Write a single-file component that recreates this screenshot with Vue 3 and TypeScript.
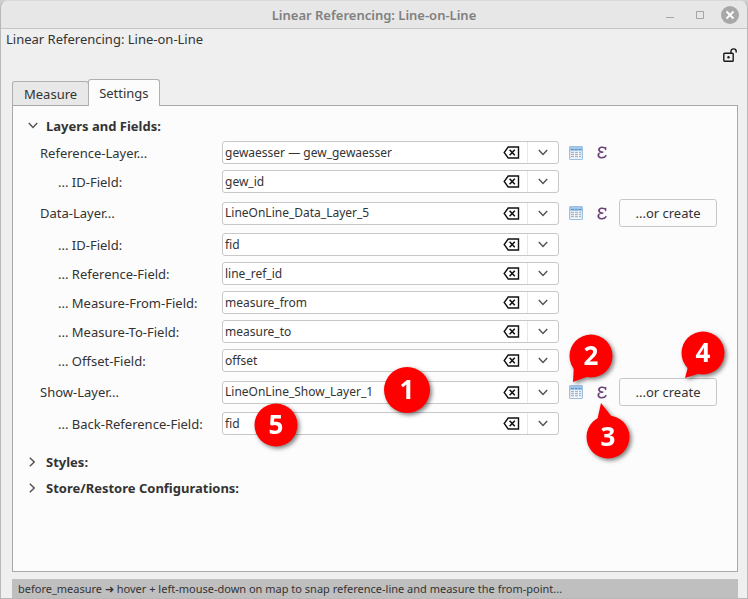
<script setup lang="ts">
import { ref } from 'vue'

interface FieldRow {
  id: string
  label: string
  value: string
  layer?: boolean
  create?: boolean
}

interface Callout {
  n: number
  r: number
  tail?: string
}

const rows = ref<FieldRow[]>([
  { id: 'ref-layer', label: 'Reference-Layer...', value: 'gewaesser — gew_gewaesser', layer: true },
  { id: 'ref-id', label: '... ID-Field:', value: 'gew_id' },
  { id: 'data-layer', label: 'Data-Layer...', value: 'LineOnLine_Data_Layer_5', layer: true, create: true },
  { id: 'data-id', label: '... ID-Field:', value: 'fid' },
  { id: 'data-ref', label: '... Reference-Field:', value: 'line_ref_id' },
  { id: 'data-from', label: '... Measure-From-Field:', value: 'measure_from' },
  { id: 'data-to', label: '... Measure-To-Field:', value: 'measure_to' },
  { id: 'data-offset', label: '... Offset-Field:', value: 'offset' },
  { id: 'show-layer', label: 'Show-Layer...', value: 'LineOnLine_Show_Layer_1', layer: true, create: true },
  { id: 'show-back', label: '... Back-Reference-Field:', value: 'fid' },
])

const callouts: Callout[] = [
  { n: 1, r: 23 },
  { n: 2, r: 21.5, tail: 'M-17 8 L-18 26 L-2 20 Z' },
  { n: 3, r: 21.5, tail: 'M-11 -16 L-7 -34 L4 -20 Z' },
  { n: 4, r: 21.5, tail: 'M-14 10 L-18 25 L-2 20 Z' },
  { n: 5, r: 21.5 },
]

const open = ref({ layers: true, styles: false, store: false })

function clearRow(row: FieldRow) {
  row.value = ''
}
</script>

<template>
  <div class="window">
    <header class="titlebar">
      <h1>Linear Referencing: Line-on-Line</h1>
      <div class="controls">
        <button type="button" aria-label="Minimize">
          <svg width="18" height="18" viewBox="0 0 18 18"><path d="M5 11.5h8" stroke="#a5a5a5" /></svg>
        </button>
        <button type="button" aria-label="Maximize">
          <svg width="18" height="18" viewBox="0 0 18 18"><path d="M5.5 5.5h7v7h-7z" fill="none" stroke="#a5a5a5" /></svg>
        </button>
        <button type="button" aria-label="Close">
          <svg width="18" height="18" viewBox="0 0 18 18">
            <circle cx="9" cy="9" r="9" fill="#a8a8a8" />
            <path d="M5.500 5.500l7 7M12.500 5.500l-7 7" stroke="#fff" stroke-width="1.8" />
          </svg>
        </button>
      </div>
    </header>

    <main class="body">
      <p class="dock-title">Linear Referencing: Line-on-Line</p>
      <div class="lock-bar">
        <button type="button" aria-label="Unlock">
          <svg width="14" height="14" viewBox="0 0 14 14" fill="none" stroke="#1a1a1a" stroke-width="1.4">
            <rect x="0.8" y="5.2" width="9.4" height="8" rx="0.8" />
            <path d="M8 5V3.4Q8 0.9 10.6 0.9Q13.2 0.9 13.2 3.4V4.6" />
            <circle cx="5.5" cy="9.2" r="1.2" fill="#1a1a1a" stroke="none" />
          </svg>
        </button>
      </div>

      <div class="tabs" role="tablist">
        <button type="button" role="tab" aria-selected="false" class="tab">Measure</button>
        <button type="button" role="tab" aria-selected="true" class="tab active">Settings</button>
      </div>

      <section class="panel" role="tabpanel">
        <button type="button" class="section" :aria-expanded="open.layers" @click="open.layers = !open.layers">
          <svg width="10" height="10" viewBox="0 0 10 10"><path d="M0.8 2L5 6.4L9.2 2" /></svg>
          Layers and Fields:
        </button>

        <div v-show="open.layers" class="form">
          <div v-for="row in rows" :key="row.id" class="row" :class="{ tall: row.create }">
            <label :for="row.id" :class="{ sub: !row.layer }">{{ row.label }}</label>
            <div class="combo">
              <select :id="row.id" v-model="row.value">
                <option>{{ row.value }}</option>
              </select>
              <button type="button" class="clear" :aria-label="'Clear ' + row.label" @click="clearRow(row)">
                <svg width="17" height="13" viewBox="0 0 17 13" fill="none" stroke="#111">
                  <path d="M5.200 1H15.500V12H5.200L1.200 6.500Z" stroke-width="1.4" />
                  <path d="M6.600 3.800l5.200 5.400M11.800 3.800l-5.200 5.400" stroke-width="1.6" />
                </svg>
              </button>
              <span class="arrow">
                <svg width="10" height="7" viewBox="0 0 10 7"><path d="M0.8 1L5 5.400L9.200 1" /></svg>
              </span>
            </div>
            <button v-if="row.layer" type="button" class="icon" aria-label="Open table">
              <svg width="14" height="14" viewBox="0 0 14 14">
                <rect x="0.5" y="0.5" width="13" height="13" rx="0.5" fill="#dfe8f1" stroke="#9dbfe0" />
                <rect x="1" y="1" width="12" height="4" fill="#a3c8ea" />
                <path d="M2 3.500h3M6 3.500h2.500M9.500 3.500h3" stroke="#5f93c4" />
                <path d="M2 6.500h3M6 6.500h3M10 6.500h2M2 8.500h3M6 8.500h3M10 8.500h2M2 10.500h3M6 10.500h3M10 10.500h2" stroke="#a9b6c4" />
                <path d="M5.500 5v8M9.500 5v8M1 12.500h12" stroke="#f3f7fb" />
              </svg>
            </button>
            <button v-if="row.layer" type="button" class="icon" aria-label="Edit expression">
              <svg width="10" height="13" viewBox="0 0 10 13" fill="none" stroke="#6b3f78" stroke-linecap="round">
                <path d="M8.600 3.600V1.400M8.600 2.600C7 0.700 2 0.600 2 3.600C2 5.500 3.800 6.100 6.400 6.100C3.400 6.100 1.200 6.800 1.200 9C1.200 12.600 7.500 12.600 9 9.600" stroke-width="1.4" />
                <path d="M2.200 2.600V4.600M1.600 7.900V10.200" stroke-width="1.400" />
              </svg>
            </button>
            <button v-if="row.create" type="button" class="create">...or create</button>
          </div>

          <svg
            v-for="c in callouts"
            :key="c.n"
            class="callout"
            :class="'c' + c.n"
            width="46"
            height="46"
            viewBox="-23 -23 46 46"
          >
            <path v-if="c.tail" :d="c.tail" fill="#ff0000" />
            <circle :r="c.r" fill="#ff0000" />
            <text y="9" text-anchor="middle">{{ c.n }}</text>
          </svg>
        </div>

        <button type="button" class="section" :aria-expanded="open.styles" @click="open.styles = !open.styles">
          <svg width="10" height="10" viewBox="0 0 10 10"><path d="M1.800 0.800L6.200 5L1.800 9.200" /></svg>
          Styles:
        </button>
        <button type="button" class="section" :aria-expanded="open.store" @click="open.store = !open.store">
          <svg width="10" height="10" viewBox="0 0 10 10"><path d="M1.800 0.800L6.200 5L1.800 9.200" /></svg>
          Store/Restore Configurations:
        </button>
      </section>

      <footer class="status">before_measure ➜ hover + left-mouse-down on map to snap reference-line and measure the from-point...</footer>
    </main>
  </div>
</template>

<style>
body {
  margin: 0;
  background: #cfcfcf;
}
</style>

<style scoped>
.window {
  box-sizing: border-box;
  min-height: 100vh;
  display: flex;
  flex-direction: column;
  border: 1px solid #b8b8b8;
  border-top-color: #d8d8d8;
  border-radius: 8px 8px 0 0;
  background: #efefef;
  color: #333;
  font-family: 'Noto Sans', 'Open Sans', sans-serif;
  font-size: 13px;
  line-height: 18px;
}
button {
  margin: 0;
  padding: 0;
  border: 0;
  background: none;
  color: inherit;
  font: inherit;
}
svg {
  display: block;
}
.titlebar {
  display: grid;
  grid-template-columns: 1fr auto 1fr;
  align-items: center;
  height: 27px;
  border-bottom: 1px solid #c4c4c4;
  border-radius: 8px 8px 0 0;
  background: #e7e7e7;
}
.titlebar h1 {
  grid-column: 2;
  margin: 0;
  color: #808080;
  font-size: 13px;
  font-weight: 600;
}
.controls {
  display: flex;
  justify-content: flex-end;
  gap: 12px;
  padding-right: 8px;
}
.body {
  flex: 1;
  display: flex;
  flex-direction: column;
  padding: 0 9px 0 11px;
}
.dock-title {
  margin: 1px 0 0 -6px;
}
.lock-bar {
  display: flex;
  justify-content: flex-end;
  padding-right: 1px;
}
.tabs {
  display: flex;
  align-items: flex-end;
  margin-top: 17px;
}
.tab {
  box-sizing: border-box;
  height: 24px;
  padding: 0 11px;
  border: 1px solid #b0b0b0;
  border-bottom: 0;
  border-radius: 3px 3px 0 0;
  background: #e8e8e8;
}
.tab.active {
  position: relative;
  height: 27px;
  margin: 0 0 -1px -1px;
  padding: 0 10px;
  background: #fcfcfc;
}
.panel {
  flex: 1;
  padding: 7px 20px 7px 15px;
  border: 1px solid #a9a9a9;
  background: #fcfcfc;
}
.section {
  display: flex;
  align-items: center;
  gap: 8px;
  height: 26px;
  font-weight: 700;
}
.section path,
.arrow path {
  fill: none;
  stroke: #555;
  stroke-width: 1.5;
}
.form {
  position: relative;
  display: flex;
  flex-direction: column;
  gap: 6px;
  padding: 2px 0 14px 12px;
}
.row {
  display: grid;
  grid-template-columns: 174px 1fr 18px 18px 98px;
  column-gap: 8px;
  align-items: center;
  height: 23px;
}
.row.tall {
  height: 28px;
}
.sub {
  padding-left: 18px;
}
.combo {
  box-sizing: border-box;
  display: grid;
  grid-template-columns: 1fr 32px 31px;
  height: 23px;
  border: 1px solid #c8c8c8;
  border-radius: 3px;
  background: #fff;
}
.combo select {
  grid-area: 1 / 1 / 2 / 4;
  appearance: none;
  min-width: 0;
  margin: 0;
  padding: 0 64px 0 2px;
  border: 0;
  border-radius: 3px;
  background: none;
  color: #333;
  font: inherit;
  font-size: 12px;
}
.clear {
  grid-area: 1 / 2;
  display: grid;
  place-items: center;
}
.arrow {
  grid-area: 1 / 3;
  display: grid;
  place-items: center;
  border-left: 1px solid #e8e8e8;
  pointer-events: none;
}
.icon {
  display: grid;
  place-items: center;
}
.create {
  box-sizing: border-box;
  height: 28px;
  border: 1px solid #c8c8c8;
  border-radius: 3px;
}
.callout {
  position: absolute;
  overflow: visible;
  filter: drop-shadow(2px 2px 2px rgb(0 0 0 / 50%));
  pointer-events: none;
}
.callout text {
  fill: #fff;
  font-size: 26px;
  font-weight: 700;
}
.c1 {
  left: 356px;
  top: 228px;
}
.c2 {
  right: 103px;
  top: 194px;
}
.c3 {
  right: 86px;
  top: 275px;
}
.c4 {
  right: -9px;
  top: 191px;
}
.c5 {
  left: 225px;
  top: 263px;
}
.status {
  margin-top: 7px;
  padding: 1px 6px 0;
  background: #bfbfbf;
  font-size: 11px;
}
</style>
